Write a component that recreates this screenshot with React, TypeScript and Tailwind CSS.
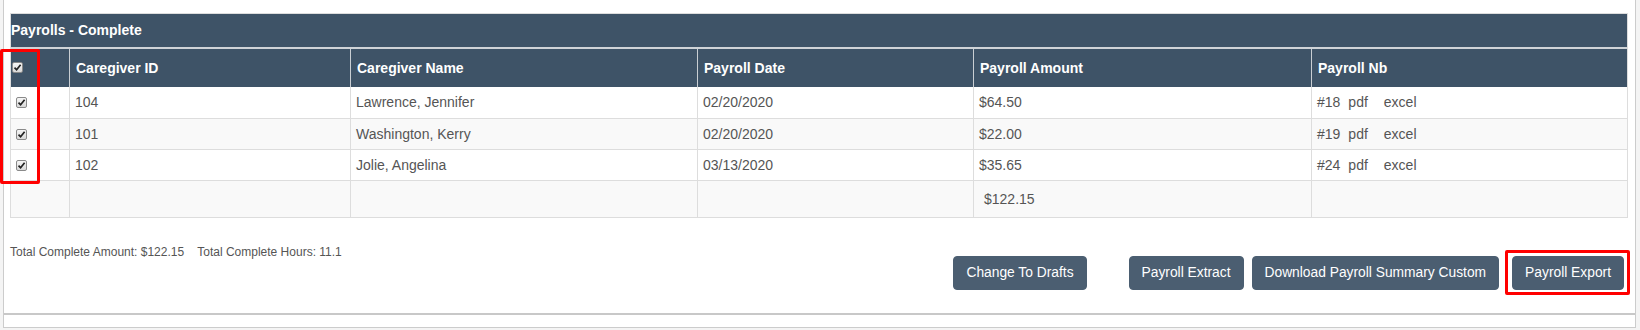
import React from "react";

const Check = () => (
  <span className="inline-flex w-[11px] h-[11px] items-center justify-center border border-[#8a8a8a] rounded-[2px] bg-gradient-to-b from-[#f6f6f6] to-[#d9d9d9]">
    <svg width="9" height="9" viewBox="0 0 9 9">
      <path d="M1.5 4.6 L3.6 6.8 L7.6 1.8" fill="none" stroke="#222" strokeWidth="1.7" />
    </svg>
  </span>
);

const rows = [
  { id: "104", name: "Lawrence, Jennifer", date: "02/20/2020", amt: "$64.50", nb: "#18", bg: "bg-white" },
  { id: "101", name: "Washington, Kerry", date: "02/20/2020", amt: "$22.00", nb: "#19", bg: "bg-[#f9f9f9]" },
  { id: "102", name: "Jolie, Angelina", date: "03/13/2020", amt: "$35.65", nb: "#24", bg: "bg-white" },
];

const grid = "grid grid-cols-[58px_281px_347px_276px_338px_316px]";
const cell = "flex items-center pl-[5px] border-l border-[#dddddd]";
const hcell = "flex items-center pl-[6px] border-l border-[#c9ced3] font-bold text-white";

const btn =
  "h-[34px] px-[12px] rounded-[4px] bg-[#4b5e71] border border-[#4b5e71] text-white text-[13.8px] leading-[20px] whitespace-nowrap";

export default function App() {
  return (
    <div className="relative w-[1640px] h-[330px] bg-[#f4f4f4] font-['Liberation_Sans',Arial,sans-serif] text-[14px] text-[#555]">
      <div className="ml-[3px] w-[1633px] h-[328px] bg-white border-l border-r border-b border-[#cccccc] pl-[6px] pr-[7px] pt-[13px]">
        <div className="w-[1618px] border border-[#dddddd]">
          <div className="h-[33px] bg-[#3e5367] text-white font-bold flex items-center">Payrolls - Complete</div>
          <div className={`${grid} h-[40px] bg-[#3e5367] border-t-2 border-[#cfd3d7]`}>
            <div className="flex items-start pl-[1px] pt-[13px]">
              <Check />
            </div>
            <div className={hcell}>Caregiver ID</div>
            <div className={hcell}>Caregiver Name</div>
            <div className={hcell}>Payroll Date</div>
            <div className={hcell}>Payroll Amount</div>
            <div className={hcell}>Payroll Nb</div>
          </div>
          {rows.map((r, i) => (
            <div key={r.id} className={`${grid} h-[31px] ${r.bg} ${i > 0 ? "border-t border-[#dddddd]" : ""}`}>
              <div className="flex items-center pl-[5px]">
                <Check />
              </div>
              <div className={cell}>{r.id}</div>
              <div className={cell}>{r.name}</div>
              <div className={cell}>{r.date}</div>
              <div className={cell}>{r.amt}</div>
              <div className={cell}>
                <span>{r.nb}</span>
                <span className="ml-[8px]">pdf</span>
                <span className="ml-[16px]">excel</span>
              </div>
            </div>
          ))}
          <div className={`${grid} h-[37px] bg-[#f9f9f9] border-t border-[#dddddd]`}>
            <div />
            <div className={cell} />
            <div className={cell} />
            <div className={cell} />
            <div className={`${cell} pl-[10px]`}>$122.15</div>
            <div className={cell} />
          </div>
        </div>
        <div className="flex justify-between items-start h-[72px]">
          <div className="mt-[27px] text-[12px] leading-[14px] whitespace-pre">
            Total Complete Amount: $122.15{"    "}Total Complete Hours: 11.1
          </div>
          <div className="flex mt-[38px] mr-[4px]">
            <button className={btn}>Change To Drafts</button>
            <button className={`${btn} ml-[42px]`}>Payroll Extract</button>
            <button className={`${btn} ml-[8px]`}>Download Payroll Summary Custom</button>
            <button className={`${btn} ml-[13px] relative`}>
              Payroll Export
              <span className="absolute -left-[8px] -right-[7px] -top-[7px] -bottom-[6px] border-[3px] border-[#ff0000] rounded-[2px] pointer-events-none" />
            </button>
          </div>
        </div>
        <div className="-ml-[6px] -mr-[7px] mt-[23px] h-[2px] bg-[#c8c8c8]" />
      </div>
      <div className="absolute left-0 top-[49px] w-[40px] h-[135px] border-[3px] border-[#ff0000] rounded-[2px] pointer-events-none" />
    </div>
  );
}
